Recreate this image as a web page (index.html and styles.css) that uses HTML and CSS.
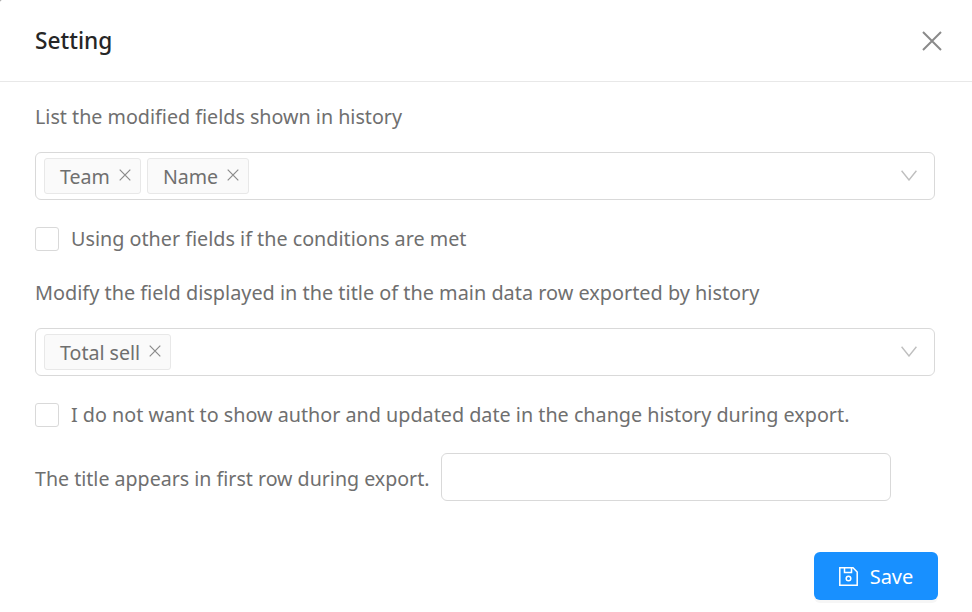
FILE: index.html
```html
<!DOCTYPE html>
<html lang="en">
<head>
<meta charset="utf-8">
<title>Setting</title>
<link rel="stylesheet" href="styles.css">
</head>
<body>
<div class="modal">
  <header class="modal-header">
    <h1 class="modal-title">Setting</h1>
    <button class="close-btn" aria-label="Close">
      <svg width="20" height="20" viewBox="0 0 20 20"><path d="M1 1L19 19M19 1L1 19" fill="none" stroke="#8a8a8a" stroke-width="2"/></svg>
    </button>
  </header>
  <main class="modal-body">
    <p class="label first-label">List the modified fields shown in history</p>
    <div class="select">
      <span class="tag"><span class="tag-text">Team</span><svg class="tag-x" width="12" height="12" viewBox="0 0 12 12"><path d="M.7.7L11.3 11.3M11.3.7L.7 11.3"/></svg></span>
      <span class="tag"><span class="tag-text">Name</span><svg class="tag-x" width="12" height="12" viewBox="0 0 12 12"><path d="M.7.7L11.3 11.3M11.3.7L.7 11.3"/></svg></span>
      <svg class="chevron" width="16" height="11" viewBox="0 0 16 11"><path d="M.6.8L8 10L15.4.8"/></svg>
    </div>
    <label class="check-row check-one"><span class="checkbox"></span><span class="label">Using other fields if the conditions are met</span></label>
    <p class="label second-label">Modify the field displayed in the title of the main data row exported by history</p>
    <div class="select">
      <span class="tag"><span class="tag-text">Total sell</span><svg class="tag-x" width="12" height="12" viewBox="0 0 12 12"><path d="M.7.7L11.3 11.3M11.3.7L.7 11.3"/></svg></span>
      <svg class="chevron" width="16" height="11" viewBox="0 0 16 11"><path d="M.6.8L8 10L15.4.8"/></svg>
    </div>
    <label class="check-row check-two"><span class="checkbox"></span><span class="label">I do not want to show author and updated date in the change history during export.</span></label>
    <div class="title-row">
      <span class="label title-label">The title appears in first row during export.</span>
      <input class="text-input" type="text">
    </div>
    <div class="actions">
      <button class="save-btn">
        <svg width="19" height="19" viewBox="0 0 19 19" fill="none" stroke="#fff" stroke-width="1.5"><path d="M.8.8H14L18.2 5V18.2H.8Z"/><path d="M5.5 1V5.6H12.5V1"/><circle cx="9.5" cy="11.5" r="2.3"/></svg>
        <span>Save</span>
      </button>
    </div>
  </main>
</div>
</body>
</html>
```
FILE: styles.css
```css
* { box-sizing: border-box; }
html, body { margin: 0; height: 100%; overflow: hidden; }
body { font-family: "Noto Sans", "Open Sans", sans-serif; color: #6f6f6f; background: #8c8c8c; }
.modal { width: 972px; height: 612px; background: #fff; border-top-left-radius: 2px; }
.modal-header {
  height: 82px;
  border-bottom: 1px solid #e8e8e8;
  padding: 0 29px 0 35px;
  display: flex;
  align-items: center;
  justify-content: space-between;
}
.modal-title { margin: 0; font-size: 22.7px; font-weight: 500; color: #262626; }
.close-btn { border: 0; background: none; padding: 0; width: 22px; height: 22px; display: flex; align-items: center; justify-content: center; }
.modal-body { padding: 0 34px 0 35px; }
.label { font-size: 19.75px; line-height: 30px; color: #6f6f6f; margin: 0; }
.first-label { margin-top: 20px; margin-bottom: 20px; font-size: 19.7px; }
.second-label { margin-top: 24px; margin-bottom: 20px; font-size: 19.88px; }
.select {
  width: 900px;
  height: 48px;
  border: 1px solid #d9d9d9;
  border-radius: 6px;
  padding: 5px 8px;
  display: flex;
  align-items: center;
  gap: 6px;
  position: relative;
}
.tag {
  height: 36px;
  display: flex;
  align-items: center;
  gap: 9px;
  padding: 0 9px 0 15px;
  background: #fafafa;
  border: 1px solid #e8e8e8;
  border-radius: 3px;
  font-size: 19.6px;
  color: #6f6f6f;
}
.tag-x { margin-top: -2px; }
.tag-x path { fill: none; stroke: #8a8a8a; stroke-width: 1.2; }
.chevron { position: absolute; right: 17px; top: 17px; }
.chevron path { fill: none; stroke: #bfbfbf; stroke-width: 1.4; }
.check-row { display: flex; align-items: center; gap: 12px; }
.check-one { margin-top: 24px; }
.check-two { margin-top: 24px; }
.checkbox { width: 24px; height: 24px; border: 1px solid #d9d9d9; border-radius: 3px; background: #fff; flex: none; }
.title-row { margin-top: 23px; display: flex; align-items: center; gap: 11px; }
.title-label { font-size: 19.6px; padding-top: 3px; }
.text-input { width: 450px; height: 48px; border: 1px solid #d9d9d9; border-radius: 6px; background: #fff; outline: none; }
.actions { margin-top: 51px; display: flex; justify-content: flex-end; }
.save-btn {
  width: 124px;
  height: 48px;
  border: 0;
  border-radius: 6px;
  background: #1890ff;
  color: #fff;
  font-family: inherit;
  font-size: 20px;
  display: flex;
  align-items: center;
  justify-content: center;
  gap: 12px;
  box-shadow: 0 3px 0 rgba(0,0,0,.035);
}
```
